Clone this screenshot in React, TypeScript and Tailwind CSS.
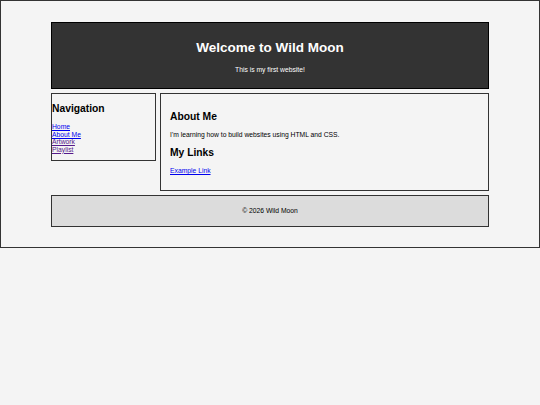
export default function App() {
  return (
    <div className="min-h-screen bg-[#f4f4f4] font-['Liberation_Sans',Arial,sans-serif] text-black">
      <div className="h-[248px] border border-[#333] pt-[21px]">
        <div className="mx-auto w-[438px]">
          <header className="flex h-[67px] flex-col items-center border border-black bg-[#333] pt-[17px] text-center text-white">
            <h1 className="text-[13.5px] font-bold leading-[16px]">Welcome to Wild Moon</h1>
            <p className="mt-[10px] text-[6.75px] leading-[8px]">This is my first website!</p>
          </header>

          <div className="mt-[4px] flex items-start gap-[4px]">
            <nav className="h-[68px] w-[105px] border border-[#333] pt-[9px]">
              <h2 className="text-[10.3px] font-bold leading-[12px]">Navigation</h2>
              <ul className="mt-[8px] text-[6.75px] leading-[7.5px]">
                <li>
                  <a href="#" className="text-[#0000ee] underline">Home</a>
                </li>
                <li>
                  <a href="#" className="text-[#0000ee] underline">About Me</a>
                </li>
                <li>
                  <a href="#" className="text-[#551a8b] underline">Artwork</a>
                </li>
                <li>
                  <a href="#" className="text-[#551a8b] underline">Playlist</a>
                </li>
              </ul>
            </nav>

            <main className="h-[98px] w-[329px] border border-[#333] pl-[9px] pt-[17px]">
              <h2 className="text-[10.3px] font-bold leading-[12px]">About Me</h2>
              <p className="mt-[8px] text-[6.75px] leading-[8px]">
                I'm learning how to build websites using HTML and CSS.
              </p>
              <h2 className="mt-[8px] text-[10.3px] font-bold leading-[12px]">My Links</h2>
              <p className="mt-[8px] text-[6.75px] leading-[8px]">
                <a href="#" className="text-[#0000ee] underline">Example Link</a>
              </p>
            </main>
          </div>

          <footer className="mt-[4px] flex h-[32px] items-center justify-center border border-[#333] bg-[#dcdcdc] text-[6.75px] leading-[8px]">
            © 2026 Wild Moon
          </footer>
        </div>
      </div>
    </div>
  )
}
